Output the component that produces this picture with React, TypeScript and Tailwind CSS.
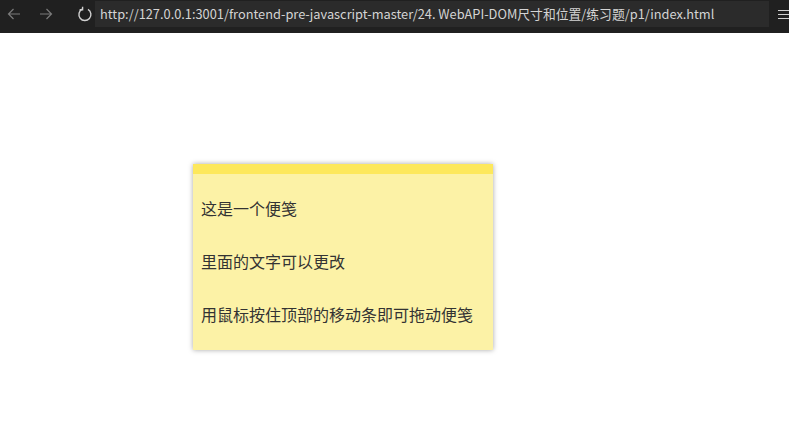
import React from 'react';

const font = "font-['Microsoft_YaHei','Noto_Sans_CJK_SC',sans-serif]";

const App: React.FC = () => {
  return (
    <div className="w-[789px] h-[434px] bg-white overflow-hidden">
      {/* browser toolbar */}
      <div className="h-[33px] bg-[#202020] flex items-start pt-[1px]">
        <div className="flex items-center h-[26px] text-[#7a7a7a]">
          <svg className="ml-[6px]" width="16" height="16" viewBox="0 0 16 16" fill="none" stroke="currentColor" strokeWidth="1.2">
            <path d="M14 8H2.5M7.5 3L2.5 8l5 5" />
          </svg>
          <svg className="ml-[16px]" width="16" height="16" viewBox="0 0 16 16" fill="none" stroke="currentColor" strokeWidth="1.2">
            <path d="M2 8h11.5M8.5 3l5 5-5 5" />
          </svg>
          <svg className="ml-[23px] text-[#d0d0d0]" width="16" height="16" viewBox="0 0 16 16" fill="none" stroke="currentColor" strokeWidth="1.4">
            <path d="M5.2 3.2A6 6 0 1 0 11 3.4" />
            <path d="M5.6 0.8v3h-3" />
          </svg>
        </div>
        <div className={`ml-[2px] w-[674px] h-[26px] bg-[#2b2b2b] flex items-center pl-[5px] text-[12.8px] text-[#d4d4d4] ${font}`}>
          http://127.0.0.1:3001/frontend-pre-javascript-master/24. WebAPI-DOM尺寸和位置/练习题/p1/index.html
        </div>
        <div className="ml-[9px] h-[26px] flex flex-col justify-center gap-[3px]">
          <div className="w-[11px] h-[1px] bg-[#d0d0d0]" />
          <div className="w-[11px] h-[1px] bg-[#d0d0d0]" />
          <div className="w-[11px] h-[1px] bg-[#d0d0d0]" />
        </div>
      </div>

      {/* sticky note */}
      <div className="ml-[193px] mt-[131px] w-[300px] h-[186px] bg-[#fcf2a6] shadow-[0_0_5px_rgba(0,0,0,0.35)]">
        <div className="h-[10px] bg-[#fde85c]" />
        <div className={`px-[8px] pt-[24px] flex flex-col gap-[32px] text-[16px] leading-[21px] text-[#333] ${font}`}>
          <p>这是一个便笺</p>
          <p>里面的文字可以更改</p>
          <p>用鼠标按住顶部的移动条即可拖动便笺</p>
        </div>
      </div>
    </div>
  );
};

export default App;
